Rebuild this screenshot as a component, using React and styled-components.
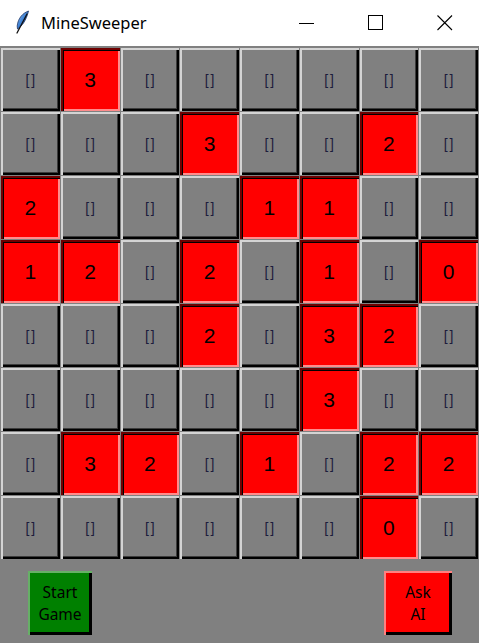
import React from "react";
import styled, { createGlobalStyle } from "styled-components";

const Global = createGlobalStyle`
  html, body { margin: 0; padding: 0; background: #808080; }
  body { width: 479px; height: 643px; overflow: hidden; }
  #root { width: 479px; height: 643px; }
`;

const Window = styled.div`
  width: 479px;
  height: 643px;
  display: flex;
  flex-direction: column;
  background: #808080;
  font-family: "Liberation Sans", Arial, sans-serif;
`;

const TitleBar = styled.div`
  height: 46px;
  flex: none;
  background: #ffffff;
  display: flex;
  align-items: center;
`;

const AppIcon = styled.div`
  width: 41px;
  display: flex;
  justify-content: center;
  padding-left: 2px;
  box-sizing: border-box;
`;

const Title = styled.div`
  flex: 1;
  font-family: "Noto Sans", "Open Sans", sans-serif;
  font-size: 16.5px;
  color: #000;
  padding-bottom: 2px;
`;

const CtrlButton = styled.div`
  width: 69px;
  height: 46px;
  display: flex;
  align-items: center;
  justify-content: center;
`;

const Board = styled.div`
  display: grid;
  grid-template-columns: repeat(8, 1fr);
  grid-template-rows: repeat(8, 63px);
  gap: 1px;
  padding: 2px 1px 0 1px;
`;

const Cell = styled.div`
  display: flex;
  align-items: center;
  justify-content: center;
  background: ${(p) => (p.$open ? "#ff0000" : "#808080")};
  box-shadow: ${(p) =>
    p.$open
      ? "inset 2px 2px 0 #6e0000, inset 3px 3px 0 #000, inset -2px -2px 0 #ff8c8c"
      : "inset 2px 2px 0 #d4d4d4, inset -2px -2px 0 #000, inset -3px -3px 0 #3c3c3c"};
  color: #000;
  font-size: 21px;
  font-family: "Liberation Sans", Arial, sans-serif;
  padding-top: 1px;
  box-sizing: border-box;
`;

const Hidden = styled.span`
  font-family: "Liberation Sans", Arial, sans-serif;
  font-size: 14px;
  color: #1c1c3c;
  letter-spacing: 2px;
  margin-left: 2px;
`;

const Footer = styled.div`
  flex: 1;
  display: flex;
  justify-content: space-between;
  align-items: flex-start;
  padding: 12px 27px 0 28px;
`;

const ActionButton = styled.div`
  width: ${(p) => p.$w}px;
  height: 64px;
  box-sizing: border-box;
  display: flex;
  align-items: center;
  justify-content: center;
  text-align: center;
  background: ${(p) => p.$bg};
  box-shadow: inset 2px 2px 0 ${(p) => p.$light}, inset -3px -3px 0 #000;
  font-family: "Noto Sans", "Open Sans", sans-serif;
  font-size: 15.5px;
  line-height: 22px;
  color: #000;
`;

const board = [
  ["", "3", "", "", "", "", "", ""],
  ["", "", "", "3", "", "", "2", ""],
  ["2", "", "", "", "1", "1", "", ""],
  ["1", "2", "", "2", "", "1", "", "0"],
  ["", "", "", "2", "", "3", "2", ""],
  ["", "", "", "", "", "3", "", ""],
  ["", "3", "2", "", "1", "", "2", "2"],
  ["", "", "", "", "", "", "0", ""],
];

const Feather = () => (
  <svg width="16" height="26" viewBox="0 0 16 26">
    <defs>
      <linearGradient id="fg" x1="0" y1="0" x2="1" y2="1">
        <stop offset="0" stopColor="#9fc6f0" />
        <stop offset="0.5" stopColor="#3a7fd4" />
        <stop offset="1" stopColor="#1b3f8a" />
      </linearGradient>
    </defs>
    <path d="M14.5 1 C9 3 4 8 3.2 16 L3.5 19 C8 16 12 11 14.5 1 Z" fill="url(#fg)" stroke="#1d3566" strokeWidth="0.8" />
    <path d="M13 4 L3 23" stroke="#111" strokeWidth="1.3" strokeLinecap="round" />
  </svg>
);

export default function App() {
  return (
    <Window>
      <Global />
      <TitleBar>
        <AppIcon>
          <Feather />
        </AppIcon>
        <Title>MineSweeper</Title>
        <CtrlButton>
          <svg width="16" height="16" viewBox="0 0 16 16">
            <line x1="0" y1="8.5" x2="15" y2="8.5" stroke="#000" strokeWidth="1" />
          </svg>
        </CtrlButton>
        <CtrlButton>
          <svg width="16" height="16" viewBox="0 0 16 16">
            <rect x="0.5" y="0.5" width="14" height="14" fill="none" stroke="#000" strokeWidth="1" />
          </svg>
        </CtrlButton>
        <CtrlButton>
          <svg width="16" height="16" viewBox="0 0 16 16">
            <path d="M0.5 0.5 L15 15 M15 0.5 L0.5 15" stroke="#000" strokeWidth="1.1" />
          </svg>
        </CtrlButton>
      </TitleBar>
      <Board>
        {board.flatMap((row, r) =>
          row.map((v, c) => (
            <Cell key={`${r}-${c}`} $open={v !== ""}>
              {v !== "" ? v : <Hidden>[]</Hidden>}
            </Cell>
          ))
        )}
      </Board>
      <Footer>
        <ActionButton $w={64} $bg="#008000" $light="#66b066">
          Start
          <br />
          Game
        </ActionButton>
        <ActionButton $w={68} $bg="#ff0000" $light="#ff8080">
          Ask
          <br />
          AI
        </ActionButton>
      </Footer>
    </Window>
  );
}
